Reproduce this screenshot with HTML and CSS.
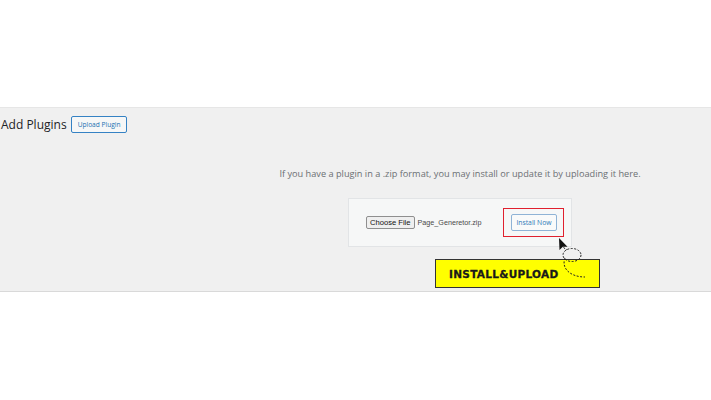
FILE: index.html
```html
<!DOCTYPE html>
<html>
<head>
<meta charset="utf-8">
<link rel="stylesheet" href="styles.css">
</head>
<body>
<div class="top"></div>
<section class="panel">
  <div class="head">
    <h1 class="title">Add Plugins</h1>
    <span class="btn-upload">Upload Plugin</span>
  </div>
  <div class="upload">
    <p class="desc">If you have a plugin in a .zip format, you may install or update it by uploading it here.</p>
    <div class="card">
      <span class="choose">Choose File</span>
      <span class="fname">Page_Generetor.zip</span>
      <span class="highlight"><span class="install">Install Now</span></span>
    </div>
  </div>
  <div class="label">INSTALL&amp;UPLOAD</div>
  <svg class="pointer" width="40" height="50" viewBox="0 0 40 50">
    <path d="M3 2 L3.5 14 L6.8 10.8 L11.5 10.8 Z" fill="#111"/>
    <path d="M7.5 11.5 L11 14" stroke="#111" stroke-width="1" stroke-dasharray="2 1.5" fill="none"/>
    <ellipse cx="16" cy="19" rx="9" ry="6.5" stroke="#222" stroke-width="1" stroke-dasharray="2 1.5" fill="none"/>
    <path d="M9 22 C 5 32, 14 41, 29 41" stroke="#222" stroke-width="1" stroke-dasharray="2 1.5" fill="none"/>
  </svg>
</section>
</body>
</html>
```
FILE: styles.css
```css
html, body {
  margin: 0;
  padding: 0;
  background: #fff;
  font-family: "Open Sans", "Noto Sans", sans-serif;
}
.top {
  height: 107px;
}
.panel {
  position: relative;
  height: 183px;
  background: #f0f0f0;
  border-top: 1px solid #e6e6e6;
  border-bottom: 1px solid #d9d9d9;
  box-sizing: content-box;
}
.head {
  display: flex;
  align-items: center;
  gap: 4px;
  padding: 8px 0 0 1px;
}
.title {
  margin: 0;
  font-weight: 400;
  font-size: 12px;
  color: #1d2327;
}
.btn-upload {
  display: inline-block;
  font-size: 6.6px;
  color: #2271b1;
  border: 1px solid #3582c4;
  border-radius: 2px;
  background: #f6f7f7;
  padding: 4px 6px;
  line-height: 7px;
}
.upload {
  padding-left: 209px;
  display: flex;
  flex-direction: column;
  align-items: center;
}
.desc {
  margin: 35px 0 0 0;
  font-size: 9.2px;
  color: #6b6f73;
  line-height: 12px;
}
.card {
  margin-top: 18px;
  width: 224px;
  height: 49px;
  box-sizing: border-box;
  background: #f6f7f7;
  border: 1px solid #e2e4e6;
  display: flex;
  align-items: center;
  padding-left: 17px;
}
.choose {
  font-family: "Liberation Sans", Arial, sans-serif;
  font-size: 7.6px;
  color: #111;
  background: #efefef;
  border: 1px solid #8f8f8f;
  border-radius: 2px;
  padding: 1px 3px;
  line-height: 9px;
}
.fname {
  font-family: "Liberation Sans", Arial, sans-serif;
  font-size: 7.2px;
  color: #4a4a4a;
  margin-left: 3px;
}
.highlight {
  margin-left: 22px;
  width: 61px;
  height: 29px;
  box-sizing: border-box;
  border: 1.5px solid #e0202e;
  display: flex;
  align-items: center;
  justify-content: center;
}
.install {
  font-size: 6.8px;
  color: #2f7ab8;
  border: 1px solid #8fb3d6;
  border-radius: 2px;
  background: #f9fafa;
  width: 46px;
  height: 17px;
  box-sizing: border-box;
  display: flex;
  align-items: center;
  justify-content: center;
}
.label {
  position: absolute;
  left: 435px;
  top: 151px;
  width: 165px;
  height: 29px;
  box-sizing: border-box;
  background: #ffff00;
  border: 1px solid #333;
  font-family: "DejaVu Sans", sans-serif;
  font-weight: 700;
  font-size: 10.5px;
  letter-spacing: 0.3px;
  color: #1a1a1a;
  -webkit-text-stroke: 0.3px #1a1a1a;
  padding-left: 13px;
  display: flex;
  align-items: center;
}
.pointer {
  position: absolute;
  left: 556px;
  top: 128px;
}
```
